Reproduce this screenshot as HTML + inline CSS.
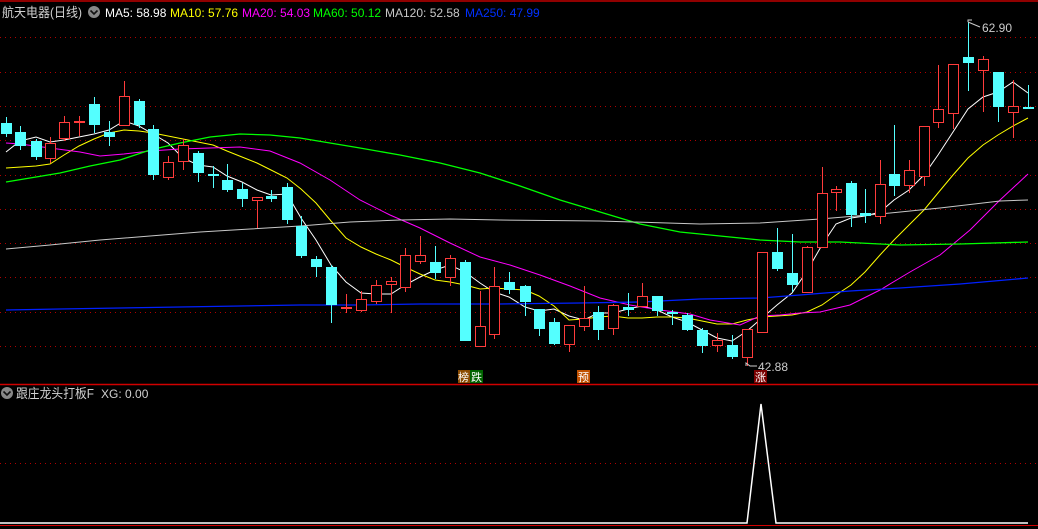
<!DOCTYPE html>
<html><head><meta charset="utf-8"><style>
html,body{margin:0;padding:0;background:#000;width:1038px;height:529px;overflow:hidden}
svg{display:block}
text{font-family:"Liberation Sans","Noto Sans CJK SC",sans-serif}
</style></head><body>
<svg id="s" width="1038" height="529" viewBox="0 0 1038 529" xmlns="http://www.w3.org/2000/svg">
<rect width="1038" height="529" fill="#000"/>
<line x1="0" y1="1" x2="1038" y2="1" stroke="#c00000" stroke-width="1.5"/>
<g id="grid" stroke="#b00000" stroke-dasharray="1,4" stroke-width="1"></g>
<line x1="0" y1="384.5" x2="1038" y2="384.5" stroke="#d00000" stroke-width="1.5"/>
<line x1="0" y1="525.5" x2="1038" y2="525.5" stroke="#d00000" stroke-width="1"/>
<g id="ma" fill="none" stroke-width="1"></g>
<g id="cd"></g>
<text x="2" y="17" font-size="13" fill="#d0d0d0" textLength="80" lengthAdjust="spacingAndGlyphs">航天电器(日线)</text>
<circle cx="94" cy="12" r="6" fill="#888"/><path d="M90.5 10.5 L94 14 L97.5 10.5" stroke="#111" stroke-width="1.6" fill="none"/>
<text x="105" y="17" font-size="12" fill="#fff">MA5: 58.98</text>
<text x="170" y="17" font-size="12" fill="#ffff00">MA10: 57.76</text>
<text x="242" y="17" font-size="12" fill="#ff00ff">MA20: 54.03</text>
<text x="313" y="17" font-size="12" fill="#00ff00">MA60: 50.12</text>
<text x="385" y="17" font-size="12" fill="#c8c8c8">MA120: 52.58</text>
<text x="465" y="17" font-size="12" fill="#0030ff">MA250: 47.99</text>
<path d="M968 22 L968 20 L972 20 M968 22 L980 27" stroke="#ccc" fill="none"/>
<text x="982" y="32" font-size="12" fill="#ccc">62.90</text>
<path d="M746 366 L746 363 L750 366 L757 366" stroke="#ccc" fill="none"/>
<text x="758" y="371" font-size="12" fill="#ccc">42.88</text>
<rect x="458" y="370" width="12" height="13" fill="#8a4a00"/><text x="458" y="381" font-size="11" fill="#fff">榜</text>
<rect x="470" y="370" width="13" height="13" fill="#006400"/><text x="471" y="381" font-size="11" fill="#fff">跌</text>
<rect x="577" y="370" width="13" height="13" fill="#c05000"/><text x="578" y="381" font-size="11" fill="#fff">预</text>
<rect x="754" y="370" width="13" height="13" fill="#7a0000"/><text x="755" y="381" font-size="11" fill="#fff">涨</text>
<circle cx="7" cy="393" r="6" fill="#888"/><path d="M3.5 391.5 L7 395 L10.5 391.5" stroke="#111" stroke-width="1.6" fill="none"/>
<text x="16" y="398" font-size="13" fill="#d0d0d0" textLength="78" lengthAdjust="spacingAndGlyphs">跟庄龙头打板F</text>
<text x="101" y="398" font-size="12" fill="#d0d0d0">XG: 0.00</text>
<line x1="0" y1="463.5" x2="1038" y2="463.5" stroke="#b00000" stroke-dasharray="1,4"/>
<polyline points="0,523 747,523 761,404 776,523 1028,523" fill="none" stroke="#fff" stroke-width="1.5"/>
</svg>
<script>
var NS="http://www.w3.org/2000/svg";
function el(p,t,a){var e=document.createElementNS(NS,t);for(var k in a)e.setAttribute(k,a[k]);p.appendChild(e);return e;}
var g=document.getElementById('grid');
[37,72,106,140,175,209,243,277,312,346].forEach(function(y){el(g,'line',{x1:0,x2:1038,y1:y+.5,y2:y+.5});});
var C=[[6,'c',123,134,117,137],[20,'c',132,146,126,150],[36,'c',141,157,139,160],[50,'r',143,159,137,163],[64,'r',122,139,116,141],[79,'r',121,123,116,136],[94,'c',104,125,97,133],[109,'c',132,137,121,146],[124,'r',96,126,81,126],[139,'c',101,125,99,128],[153,'c',129,175,125,180],[168,'r',162,178,156,180],[183,'r',145,162,139,170],[198,'c',153,173,151,182],[213,'c',174,176,166,188],[227,'c',180,190,164,192],[242,'c',189,199,183,207],[257,'r',197,201,197,228],[271,'c',196,199,190,202],[287,'c',187,220,183,224],[301,'c',226,256,216,258],[316,'c',259,267,256,277],[331,'c',267,305,265,323],[346,'r',307,309,294,313],[361,'r',299,311,291,312],[376,'r',285,302,280,304],[391,'r',281,285,277,313],[405,'r',255,288,248,292],[420,'r',255,262,236,264],[435,'c',262,273,246,279],[450,'r',258,278,255,286],[465,'c',262,341,260,341],[480,'r',326,347,291,347],[494,'r',286,335,267,339],[509,'c',282,290,272,294],[525,'c',286,302,285,316],[539,'c',309,329,309,336],[554,'c',322,344,318,345],[569,'r',325,345,325,352],[584,'r',318,327,286,331],[598,'c',312,330,306,340],[613,'r',305,329,304,335],[628,'c',307,310,293,316],[642,'r',296,307,283,307],[657,'c',296,311,296,316],[672,'c',312,314,310,325],[687,'c',315,330,313,331],[702,'c',330,346,328,353],[717,'r',340,346,333,352],[732,'c',345,357,335,359],[747,'r',329,358,329,366],[762,'r',252,333,252,333],[777,'c',252,269,228,271],[792,'c',273,285,234,292],[807,'r',247,293,246,293],[822,'r',193,248,167,248],[836,'r',189,193,186,211],[851,'c',183,215,181,227],[865,'c',213,216,189,223],[880,'r',184,217,160,224],[894,'c',174,186,125,196],[909,'r',170,186,160,193],[924,'r',126,177,126,186],[938,'r',109,123,65,128],[953,'r',64,114,64,129],[968,'c',57,63,22,91],[983,'r',59,71,56,112],[998,'c',72,107,72,122],[1013,'r',106,113,80,138],[1028,'c',107,109,85,109]];
var cd=document.getElementById('cd');
C.forEach(function(c){var x=c[0],col=c[1]=='c'?'#54ffff':'#ff3c3c';
el(cd,'line',{x1:x+.5,x2:x+.5,y1:c[4],y2:c[5],stroke:col});
var h=Math.max(c[3]-c[2],1.5);
if(c[1]=='c')el(cd,'rect',{x:x-5,y:c[2],width:11,height:h,fill:col});
else{el(cd,'rect',{x:x-4.5,y:c[2]+.5,width:10,height:Math.max(h-1,1),fill:'#000',stroke:col});}
});
var M={'#ffffff':'6,152 20,141 36,137 50,142 64,140 79,137 94,134 109,130 124,121 139,126 153,134 168,143 183,158 198,165 213,167 227,176 242,182 257,190 271,195 287,194 301,218 316,240 331,265 346,282 361,293 376,294 391,294 405,285 420,277 435,270 450,265 465,272 480,283 494,292 509,297 525,307 539,311 554,309 569,316 584,320 598,313 613,313 628,309 642,306 657,310 672,317 687,322 702,330 717,338 732,341 747,331 762,318 777,305 792,293 807,271 822,245 836,224 851,218 865,216 880,212 894,200 909,190 924,175 938,155 953,132 968,109 983,97 998,92 1013,82 1028,93',
'#ffff00':'6,168 36,166 50,164 64,155 79,146 94,139 109,133 124,130 139,131 153,133 168,136 183,139 198,142 213,145 227,151 242,157 257,163 271,170 287,178 301,189 316,203 331,221 346,238 361,247 376,254 391,260 405,267 420,274 435,280 450,282 465,285 480,289 494,288 509,289 525,290 539,296 554,306 569,320 584,319 598,317 613,316 628,318 642,318 657,317 672,317 687,318 702,321 717,324 732,324 747,320 762,317 777,316 792,315 807,312 822,305 836,295 851,285 865,272 880,255 894,240 909,225 924,210 938,193 953,175 968,158 983,145 998,135 1013,126 1028,118',
'#ff00ff':'6,143 20,144 50,148 80,152 100,156 124,154 150,151 180,149 210,148 240,147 270,151 300,163 330,180 360,200 390,215 420,228 450,243 480,257 510,265 540,275 570,286 600,298 630,305 660,310 690,314 710,320 740,325 760,316 780,315 800,313 820,312 850,305 880,290 910,272 940,255 970,230 1000,200 1028,174',
'#00ff00':'6,182 30,178 60,173 90,166 120,160 150,150 180,143 210,137 240,134 270,135 300,138 330,143 360,148 400,155 440,163 480,173 520,186 560,200 600,212 640,224 680,232 720,236 760,240 800,242 840,242 900,245 960,244 1028,242',
'#c8c8c8':'6,249 50,245 100,240 150,236 200,232 250,229 300,226 350,222 400,220 450,219 500,220 600,221 700,224 760,223 820,219 880,214 940,208 1000,201 1028,200',
'#0020ff':'6,310 60,309 120,308 180,307 240,306 300,305 360,305 420,304 500,304 580,303 640,302 700,299 760,298 800,295 850,291 900,288 960,284 1028,278'};
var ma=document.getElementById('ma');
for(var k in M)el(ma,'polyline',{points:M[k],stroke:k,'stroke-width':k=='#0020ff'||k=='#00ff00'?1.3:1});
</script>
</body></html>
